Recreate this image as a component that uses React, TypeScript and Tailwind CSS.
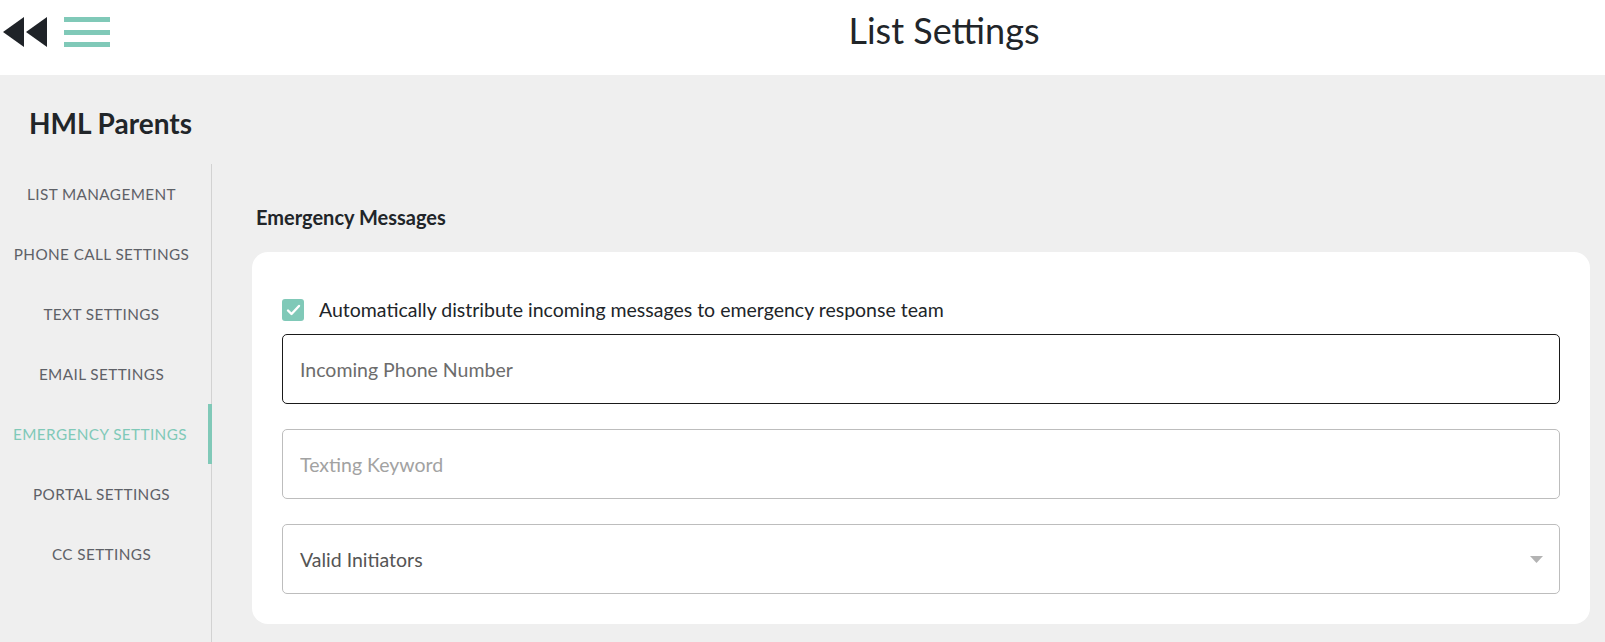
import React from 'react';

const navItems = [
  'LIST MANAGEMENT',
  'PHONE CALL SETTINGS',
  'TEXT SETTINGS',
  'EMAIL SETTINGS',
  'EMERGENCY SETTINGS',
  'PORTAL SETTINGS',
  'CC SETTINGS',
];

export default function App() {
  const [autoDistribute, setAutoDistribute] = React.useState(true);

  return (
    <div className="min-h-screen bg-[#efefef] font-['Lato',sans-serif] text-[#212529]">
      {/* Header */}
      <header className="h-[75px] bg-white flex items-start">
        <div className="w-[283px] mt-[17px] flex items-center pl-[3px] gap-[17px]">
          <svg width="44" height="30" viewBox="0 0 44 30" fill="#1f2328">
            <polygon points="21,0 21,30 0,15" />
            <polygon points="44,0 44,30 23,15" />
          </svg>
          <div className="flex flex-col gap-[7.5px]">
            <div className="w-[46px] h-[5px] bg-[#80c9b8]" />
            <div className="w-[46px] h-[5px] bg-[#80c9b8]" />
            <div className="w-[46px] h-[5px] bg-[#80c9b8]" />
          </div>
        </div>
        <h1 className="flex-1 mt-[12px] text-center text-[36px] leading-none font-normal text-[#212529]">List Settings</h1>
      </header>

      <div className="flex">
        {/* Sidebar */}
        <aside className="w-[212px] shrink-0 flex flex-col">
          <h2 className="pl-[29px] pt-[27px] h-[89px] text-[28px] font-bold text-[#212529]">HML Parents</h2>
          <nav className="border-r border-[#d2d2d2] flex flex-col pb-[40px] min-h-[478px]">
            {navItems.map(item => {
              const active = item === 'EMERGENCY SETTINGS';
              return (
                <div
                  key={item}
                  className={
                    active
                      ? 'h-[60px] flex items-center justify-center pr-[8px] text-[15.3px] tracking-[0.4px] text-[#80c9b8] border-r-4 border-[#80c9b8] -mr-[1px]'
                      : 'h-[60px] flex items-center justify-center pr-[8px] text-[15.3px] tracking-[0.4px] text-[#5e6167]'
                  }
                >
                  {item}
                </div>
              );
            })}
          </nav>
        </aside>

        {/* Main content */}
        <main className="flex-1 pl-[40px] pr-[15px]">
          <h3 className="mt-[130px] pl-[4px] text-[20px] font-bold text-[#212529] leading-[25px]">Emergency Messages</h3>
          <section className="mt-[22px] bg-white rounded-[16px] px-[30px] pt-[43px] pb-[30px]">
            <label className="flex items-center gap-[15px] cursor-pointer">
              <button
                type="button"
                onClick={() => setAutoDistribute(v => !v)}
                className="w-[22px] h-[22px] rounded-[3px] bg-[#80c9b8] flex items-center justify-center"
              >
                {autoDistribute && (
                  <svg width="15" height="12" viewBox="0 0 15 12" fill="none" stroke="white" strokeWidth="2.4" strokeLinecap="round" strokeLinejoin="round">
                    <polyline points="2,6.5 5.5,10 13,2" />
                  </svg>
                )}
              </button>
              <span className="text-[19.5px] text-[#212529]">
                Automatically distribute incoming messages to emergency response team
              </span>
            </label>

            <div className="mt-[10px] flex flex-col gap-[25px]">
              <input
                placeholder="Incoming Phone Number"
                className="h-[70px] w-full rounded-[5px] border border-[#1a1a1a] px-[17px] text-[19.5px] outline-none placeholder:text-[#6c6c6c]"
              />
              <input
                placeholder="Texting Keyword"
                className="h-[70px] w-full rounded-[5px] border border-[#bdbdbd] px-[17px] text-[19.5px] outline-none placeholder:text-[#a2a2a2]"
              />
              <div className="h-[70px] w-full rounded-[5px] border border-[#bdbdbd] pl-[17px] pr-[16px] flex items-center justify-between">
                <span className="text-[19.5px] text-[#555]">Valid Initiators</span>
                <svg width="13" height="7" viewBox="0 0 13 7" fill="#b3b3b3">
                  <polygon points="0,0 13,0 6.5,7" />
                </svg>
              </div>
            </div>
          </section>
        </main>
      </div>
    </div>
  );
}
